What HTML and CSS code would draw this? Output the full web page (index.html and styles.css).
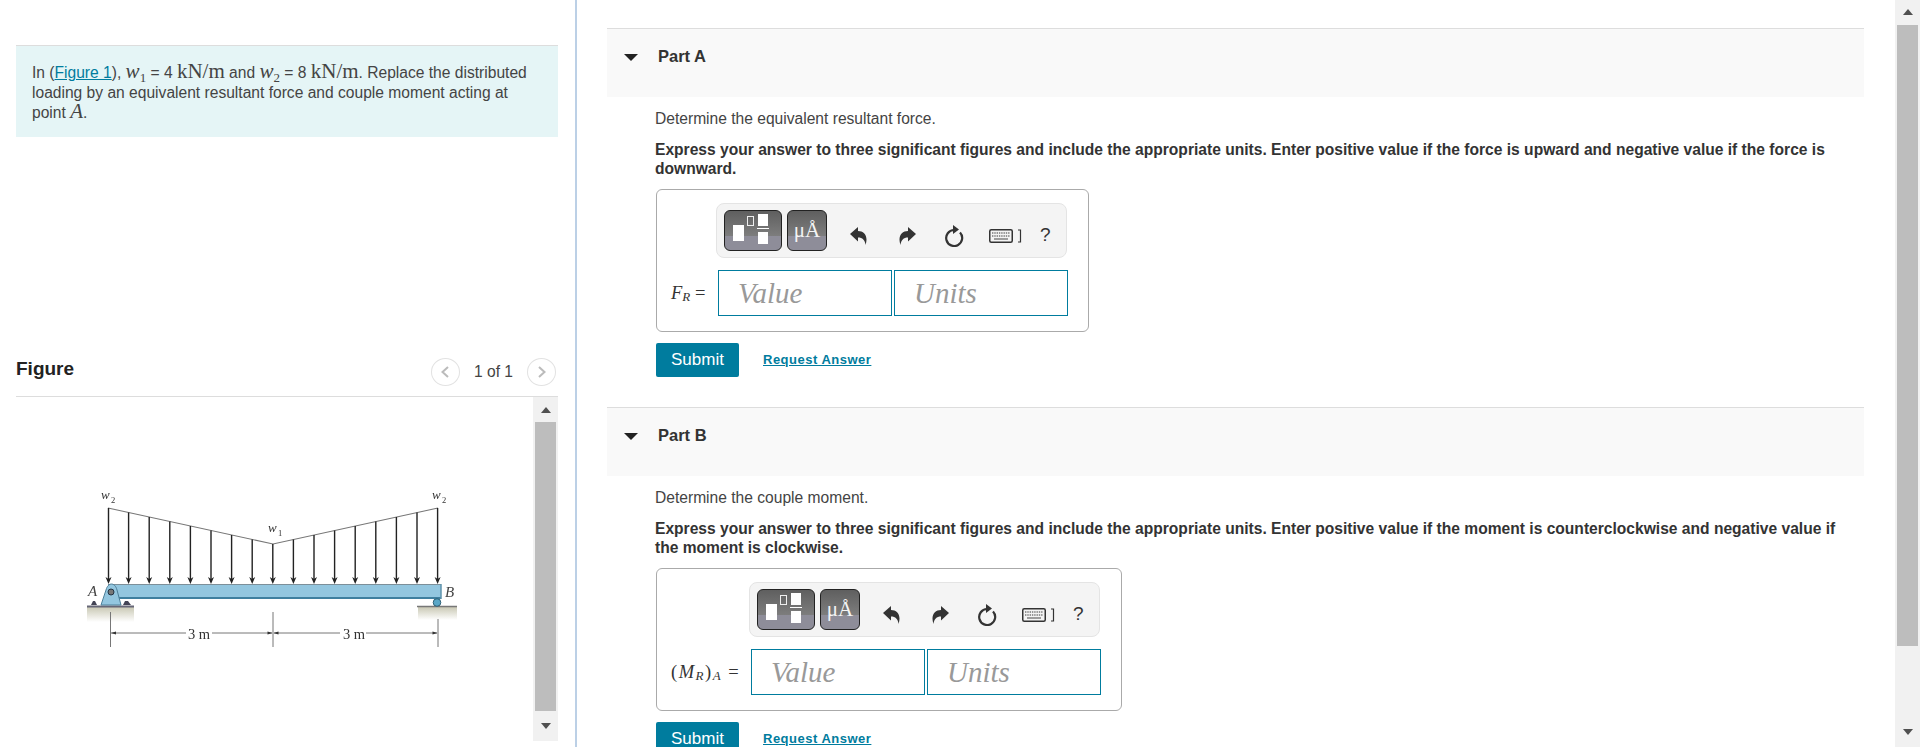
FILE: index.html
```html
<!DOCTYPE html>
<html lang="en">
<head>
  <meta charset="UTF-8" />
  <title>Part A</title>
  <link rel="stylesheet" href="styles.css">
</head>
<body>
  <svg class="defs" width="0" height="0">
    <defs>
      <path id="undo" d="M0 8 L8 1 V5 C14.5 5 18.5 10.5 15.5 19 C15 14 12.5 11.5 8 11.5 V15.5 Z" />
      <g id="kbd">
        <rect x="0.75" y="0.75" width="22.5" height="12.5" rx="1.5" fill="none" stroke="#333" stroke-width="1.5" />
        <path d="M3 4 H21 M3 7 H21" stroke="#777" stroke-width="1.4" stroke-dasharray="1.4 0.9" />
        <path d="M5 10 H19" stroke="#777" stroke-width="1.4" />
      </g>
      <g id="down-arrow">
        <path d="M-3 -7 L0 0 L3 -7 L0 -5 Z" fill="#222" />
      </g>
    </defs>
  </svg>

  <div class="left">
    <div class="intro">
      In (<a href="#">Figure 1</a>), <i class="m">w</i><sub>1</sub> = 4 <span class="m">kN/m</span> and <i class="m">w</i><sub>2</sub> = 8 <span class="m">kN/m</span>. Replace the distributed loading by an equivalent resultant force and couple moment acting at point <i class="m">A</i>.
    </div>

    <div class="fig-head">
      <h2>Figure</h2>
      <div class="pager">
        <span class="circle"><svg width="10" height="14" viewBox="0 0 10 14"><path d="M8 2 L2.5 7 L8 12" /></svg></span>
        <span class="count">1 of 1</span>
        <span class="circle"><svg width="10" height="14" viewBox="0 0 10 14"><path d="M2 2 L7.5 7 L2 12" /></svg></span>
      </div>
    </div>

    <div class="fig-body">
      <div class="fig-image">
        <svg class="beam" width="517" height="344" viewBox="16 397 517 344">
          <defs>
            <linearGradient id="ground" x1="0" y1="0" x2="0" y2="1">
              <stop offset="0" stop-color="#c9c8b4" />
              <stop offset="1" stop-color="#ffffff" />
            </linearGradient>
          </defs>
          <g class="soft">
            <!-- ground -->
            <rect x="87" y="607" width="47" height="15" fill="url(#ground)" />
            <rect x="418" y="607" width="39" height="13" fill="url(#ground)" />
            <path d="M87 606.5 H134" stroke="#667" stroke-width="2" />
            <path d="M417 606.5 H457" stroke="#777" stroke-width="1.5" />

            <!-- load outline -->
            <path d="M108 508 L273 544 L438 508" fill="none" stroke="#777" stroke-width="1.1" />
            <g stroke="#222" stroke-width="1.4">
              <path d="M108.5 508 V579 M128.6 512.5 V579 M149.2 517 V579 M169.8 521.5 V579 M190.4 526 V579 M211 530.5 V579 M231.6 535 V579 M252.2 539.5 V579 M272.8 544 V579 M293.4 539.5 V579 M314 535 V579 M334.6 530.5 V579 M355.2 526 V579 M375.8 521.5 V579 M396.4 517 V579 M417 512.5 V579 M437.6 508 V579" />
            </g>
            <use href="#down-arrow" x="108.5" y="584" />
            <use href="#down-arrow" x="128.6" y="584" />
            <use href="#down-arrow" x="149.2" y="584" />
            <use href="#down-arrow" x="169.8" y="584" />
            <use href="#down-arrow" x="190.4" y="584" />
            <use href="#down-arrow" x="211" y="584" />
            <use href="#down-arrow" x="231.6" y="584" />
            <use href="#down-arrow" x="252.2" y="584" />
            <use href="#down-arrow" x="272.8" y="584" />
            <use href="#down-arrow" x="293.4" y="584" />
            <use href="#down-arrow" x="314" y="584" />
            <use href="#down-arrow" x="334.6" y="584" />
            <use href="#down-arrow" x="355.2" y="584" />
            <use href="#down-arrow" x="375.8" y="584" />
            <use href="#down-arrow" x="396.4" y="584" />
            <use href="#down-arrow" x="417" y="584" />
            <use href="#down-arrow" x="437.6" y="584" />

            <!-- beam -->
            <rect x="108" y="584" width="333" height="15" fill="#93c6df" />
            <path d="M108 584.5 H441" stroke="#7d8f99" stroke-width="1" />
            <path d="M108 598 H441" stroke="#3f7f9f" stroke-width="2" />
            <path d="M441 584 V599" stroke="#5f93ad" stroke-width="1.5" />

            <!-- pin support -->
            <path d="M101 605 L106 590 C108 582 115 582 117 590 L121 605 Z" fill="#93c6df" stroke="#4d7f99" stroke-width="1" />
            <circle cx="111" cy="592" r="3" fill="#777" stroke="#234" stroke-width="1" />
            <path d="M91 605 L93 601 L95 601 L97 605 Z M123 605 L125 601 L128 601 L131 605 Z" fill="#445" />

            <!-- roller -->
            <circle cx="437" cy="602.5" r="3.8" fill="#5aa7c7" stroke="#2f6075" stroke-width="1" />

            <!-- dimensions -->
            <g stroke="#777" stroke-width="1" fill="none">
              <path d="M110.5 612 V647 M273 612 V647 M438 619 V647" />
              <path d="M111 633 H186 M212 633 H272 M274 633 H340 M366 633 H437" />
            </g>
            <path d="M111 633 l5 -1.5 v3 Z M272.5 633 l-5 -1.5 v3 Z M273.5 633 l5 -1.5 v3 Z M437.5 633 l-5 -1.5 v3 Z" fill="#333" />

            <text class="dim" x="199" y="639">3 m</text>
            <text class="dim" x="354" y="639">3 m</text>
            <text class="lbl-big" x="88" y="596">A</text>
            <text class="lbl-big" x="445" y="597">B</text>
            <text class="lbl" x="101" y="499">w</text><text class="lbl-sub" x="111" y="503">2</text>
            <text class="lbl" x="268" y="532">w</text><text class="lbl-sub" x="278" y="536">1</text>
            <text class="lbl" x="432" y="499">w</text><text class="lbl-sub" x="442" y="503">2</text>
          </g>
        </svg>
      </div>
      <div class="scroll scroll-fig">
        <span class="tri-up"></span>
        <span class="thumb"></span>
        <span class="tri-down"></span>
      </div>
    </div>
  </div>

  <div class="right">
    <section class="part">
      <div class="part-head"><span class="caret"></span><h3>Part A</h3></div>
      <div class="part-body">
        <p>Determine the equivalent resultant force.</p>
        <p class="strong">Express your answer to three significant figures and include the appropriate units. Enter positive value if the force is upward and negative value if the force is downward.</p>
        <div class="answer">
          <div class="toolbar">
            <span class="tool-btn tool-frac">
              <svg width="58" height="41" viewBox="0 0 58 41">
                <rect x="9" y="15" width="11" height="16" fill="#fff" />
                <rect x="23.5" y="6.5" width="6" height="9" fill="none" stroke="#eee" />
                <rect x="34" y="4" width="10" height="12" fill="#fff" />
                <rect x="33" y="18" width="12" height="1" fill="#fff" />
                <rect x="34" y="22" width="10" height="12" fill="#fff" />
              </svg>
            </span>
            <span class="tool-btn tool-units">μÅ</span>
            <svg class="ic ic-undo" width="17" height="20" viewBox="0 0 17 20"><use href="#undo" /></svg>
            <svg class="ic ic-redo" width="17" height="20" viewBox="0 0 17 20"><use href="#undo" /></svg>
            <svg class="ic ic-reset" width="20" height="22" viewBox="0 0 20 22"><path d="M10 5 A8 8 0 1 0 16 7.5" fill="none" stroke="#333" stroke-width="2.2" /><path d="M9 0 L15 4.5 L9 9 Z" fill="#333" /></svg>
            <svg class="ic ic-kbd" width="33" height="14" viewBox="0 0 33 14"><use href="#kbd" /><path d="M29 1 H31.5 V13 H29" fill="none" stroke="#333" stroke-width="1.2" /></svg>
            <span class="help">?</span>
          </div>
          <label class="ans-label label-a"><i>F</i><sub><i>R</i></sub> =</label>
          <div class="inputs">
            <input type="text" placeholder="Value" />
            <input type="text" placeholder="Units" />
          </div>
        </div>
        <div class="actions">
          <button>Submit</button>
          <a href="#">Request Answer</a>
        </div>
      </div>
    </section>

    <section class="part">
      <div class="part-head"><span class="caret"></span><h3>Part B</h3></div>
      <div class="part-body">
        <p>Determine the couple moment.</p>
        <p class="strong">Express your answer to three significant figures and include the appropriate units. Enter positive value if the moment is counterclockwise and negative value if the moment is clockwise.</p>
        <div class="answer">
          <div class="toolbar">
            <span class="tool-btn tool-frac">
              <svg width="58" height="41" viewBox="0 0 58 41">
                <rect x="9" y="15" width="11" height="16" fill="#fff" />
                <rect x="23.5" y="6.5" width="6" height="9" fill="none" stroke="#eee" />
                <rect x="34" y="4" width="10" height="12" fill="#fff" />
                <rect x="33" y="18" width="12" height="1" fill="#fff" />
                <rect x="34" y="22" width="10" height="12" fill="#fff" />
              </svg>
            </span>
            <span class="tool-btn tool-units">μÅ</span>
            <svg class="ic ic-undo" width="17" height="20" viewBox="0 0 17 20"><use href="#undo" /></svg>
            <svg class="ic ic-redo" width="17" height="20" viewBox="0 0 17 20"><use href="#undo" /></svg>
            <svg class="ic ic-reset" width="20" height="22" viewBox="0 0 20 22"><path d="M10 5 A8 8 0 1 0 16 7.5" fill="none" stroke="#333" stroke-width="2.2" /><path d="M9 0 L15 4.5 L9 9 Z" fill="#333" /></svg>
            <svg class="ic ic-kbd" width="33" height="14" viewBox="0 0 33 14"><use href="#kbd" /><path d="M29 1 H31.5 V13 H29" fill="none" stroke="#333" stroke-width="1.2" /></svg>
            <span class="help">?</span>
          </div>
          <label class="ans-label label-b">(<i>M</i><sub><i>R</i></sub>)<sub><i>A</i></sub> =</label>
          <div class="inputs">
            <input type="text" placeholder="Value" />
            <input type="text" placeholder="Units" />
          </div>
        </div>
        <div class="actions">
          <button>Submit</button>
          <a href="#">Request Answer</a>
        </div>
      </div>
    </section>
  </div>

  <div class="scroll scroll-page">
    <span class="tri-up"></span>
    <span class="thumb"></span>
    <span class="tri-down"></span>
  </div>
</body>
</html>
```

FILE: styles.css
```css
html, body {
  height: 100%;
}
body {
  margin: 0;
  display: flex;
  height: 747px;
  overflow: hidden;
  background: #fff;
  color: #444;
  font-family: "Liberation Sans", Arial, sans-serif;
  font-size: 15.6px;
  line-height: 20px;
}
.defs {
  position: absolute;
}
a {
  color: #007c9e;
}

/* left pane */
.left {
  width: 542px;
  flex: none;
  padding: 45px 17px 0 16px;
  border-right: 2px solid #bcd0e6;
}
.intro {
  height: 92px;
  box-sizing: border-box;
  padding: 17px 16px 0 16px;
  background: #e5f5f6;
  border-top: 1px solid #ddd;
}
.m {
  font-family: "Liberation Serif", serif;
  font-size: 21px;
  line-height: 0;
}
sub {
  font-size: 13px;
  line-height: 0;
}
.intro sub {
  font-family: "Liberation Serif", serif;
}
.fig-head {
  display: flex;
  align-items: center;
  justify-content: space-between;
  margin-top: 208px;
  height: 51px;
  border-bottom: 1px solid #ddd;
}
.fig-head h2 {
  margin: -3px 0 0 0;
  font-size: 19px;
  color: #222;
}
.pager {
  display: flex;
  align-items: center;
  gap: 14px;
  margin: 2px 2px 0 0;
}
.count {
  font-size: 15.6px;
  color: #444;
}
.circle {
  width: 27px;
  height: 26px;
  border: 1px solid #e2e2e2;
  border-radius: 50%;
  display: flex;
  align-items: center;
  justify-content: center;
}
.circle path {
  fill: none;
  stroke: #bbb;
  stroke-width: 2;
}
.fig-body {
  display: flex;
  height: 344px;
}
.fig-image {
  flex: 1;
}
.beam {
  display: block;
}
.soft {
  filter: blur(0.3px);
}
.dim {
  font: 14.5px "Liberation Serif", serif;
  fill: #333;
  text-anchor: middle;
}
.lbl-big {
  font: italic 15px "Liberation Serif", serif;
  fill: #444;
}
.lbl {
  font: italic 13px "Liberation Serif", serif;
  fill: #333;
}
.lbl-sub {
  font: 8.5px "Liberation Serif", serif;
  fill: #333;
}

/* scrollbars */
.scroll {
  flex: none;
  display: flex;
  flex-direction: column;
  align-items: center;
  box-sizing: border-box;
  background: #f1f1f1;
}
.scroll-fig {
  width: 25px;
  height: 344px;
  padding: 10px 0 0;
}
.scroll-page {
  width: 25px;
  height: 747px;
  padding: 9px 0 0;
}
.thumb {
  width: 21px;
  background: #bdbdbd;
}
.scroll-fig .thumb {
  height: 289px;
  margin: 9px 0 12px;
}
.scroll-page .thumb {
  height: 621px;
  margin: 10px 0 83px;
}
.tri-up, .tri-down {
  width: 0;
  height: 0;
  border-left: 5px solid transparent;
  border-right: 5px solid transparent;
}
.tri-up {
  border-bottom: 6px solid #505050;
}
.tri-down {
  border-top: 6px solid #505050;
}

/* right pane */
.right {
  flex: 1;
  min-width: 0;
  padding: 28px 31px 0 30px;
}
.part {
  margin-bottom: 30px;
}
.part-head {
  display: flex;
  height: 51px;
  padding-top: 17px;
  border-top: 1px solid #ddd;
  background: #f9f9f9;
}
.part-head h3 {
  margin: 0;
  font-size: 16.5px;
  color: #333;
}
.caret {
  margin: 8px 20px 0 17px;
  width: 0;
  height: 0;
  border-left: 7px solid transparent;
  border-right: 7px solid transparent;
  border-top: 7px solid #222;
}
.part-body {
  padding: 12px 20px 0 48px;
}
.part-body p {
  margin: 0 0 11px;
}
.part-body p.strong {
  margin-bottom: 0;
  font-weight: bold;
  color: #333;
  line-height: 19px;
}
.answer {
  display: inline-grid;
  grid-template-columns: auto auto;
  align-items: center;
  margin: 11px 0 0 1px;
  padding: 13px 20px 15px 0;
  border: 1px solid #aaa;
  border-radius: 6px;
  vertical-align: top;
}
.toolbar {
  grid-column: 2;
  display: flex;
  align-items: center;
  width: 351px;
  height: 55px;
  box-sizing: border-box;
  padding-left: 7px;
  margin-left: -2px;
  margin-bottom: 12px;
  background: #f4f4f4;
  border: 1px solid #e4e4e4;
  border-radius: 8px;
}
.tool-btn {
  box-sizing: border-box;
  height: 41px;
  border: 1px solid #222;
  border-radius: 6px;
  background: linear-gradient(#5f5f5f, #7d7d7d 64%, #8e8d99 64%, #8e8d99);
  display: block;
}
.tool-frac {
  width: 58px;
}
.tool-frac svg {
  display: block;
  margin: -1px;
}
.tool-units {
  width: 40px;
  margin-left: 5px;
  color: #f4f4f4;
  font: 21px/38px "Liberation Serif", serif;
  text-align: center;
}
.ic {
  flex: none;
  fill: #333;
  margin-top: 11px;
}
.ic-undo {
  margin-left: 23px;
}
.ic-redo {
  margin-left: 32px;
  transform: scaleX(-1);
}
.ic-reset {
  margin-left: 28px;
}
.ic-kbd {
  margin-left: 25px;
}
.help {
  margin: 9px 0 0 18px;
  font-size: 19px;
  color: #333;
}
.ans-label {
  grid-column: 1;
  box-sizing: border-box;
  padding-left: 14px;
  font: 18.5px "Liberation Serif", serif;
  white-space: nowrap;
  color: #333;
}
.label-a {
  width: 61px;
}
.label-b {
  width: 94px;
  letter-spacing: 1.5px;
}
.ans-label sub {
  font-size: 13px;
  vertical-align: -2px;
}
.inputs {
  grid-column: 2;
  display: flex;
  gap: 2px;
}
.inputs input {
  width: 174px;
  height: 46px;
  box-sizing: border-box;
  padding: 0 0 0 19px;
  border: 1px solid #007c9e;
  border-radius: 0;
  outline: none;
  font: italic 29px "Liberation Serif", serif;
}
.inputs input::placeholder {
  color: #999;
  opacity: 1;
}
.actions {
  display: flex;
  align-items: center;
  gap: 24px;
  margin: 11px 0 0 1px;
}
.actions button {
  width: 83px;
  height: 34px;
  border: none;
  border-radius: 2px;
  background: #007c9e;
  color: #fff;
  font: 17px "Liberation Sans", Arial, sans-serif;
}
.actions a {
  font-size: 13px;
  font-weight: bold;
  letter-spacing: 0.5px;
}
```
